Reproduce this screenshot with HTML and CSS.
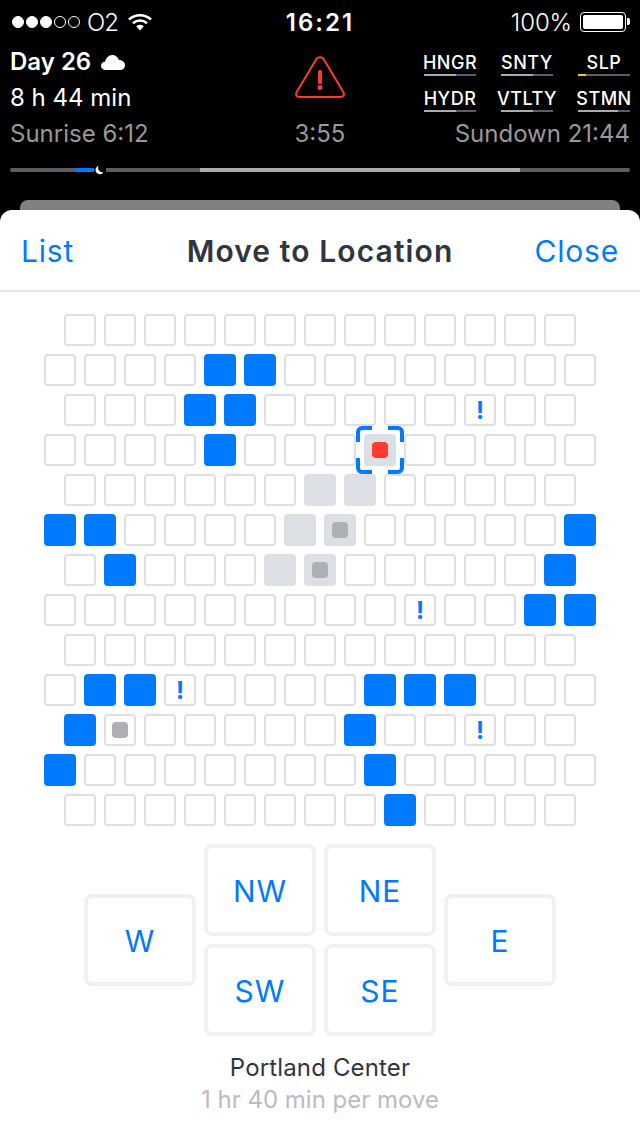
FILE: index.html
```html
<!DOCTYPE html>
<html lang="en">
<head>
    <meta charset="UTF-8">
    <title>Move to Location</title>
    <link rel="stylesheet" href="styles.css">
</head>
<body>
<div class="status">
    <div class="status-left">
        <span class="sig on"></span><span class="sig on"></span><span class="sig on"></span><span class="sig"></span><span class="sig"></span>
        <span class="carrier">O2</span>
        <svg class="wifi" width="24" height="18" viewBox="0 0 24 18">
            <path d="M1 6.500C7.200 .8 16.800 .8 23 6.500" fill="none" stroke="#fff" stroke-width="2.600"/>
            <path d="M5 10.300C9.200 6.600 14.800 6.600 19 10.300" fill="none" stroke="#fff" stroke-width="2.600"/>
            <path d="M8.200 13.200C10.600 11.400 13.400 11.400 15.800 13.200L12 17.500Z" fill="#fff"/>
        </svg>
    </div>
    <div class="clock">16:21</div>
    <div class="status-right">
        <span>100%</span>
        <span class="battery"><i></i></span>
    </div>
</div>

<div class="info">
    <div class="info-left">
        <div class="day">Day 26
            <svg class="cloud" width="24" height="15" viewBox="0 0 24 15">
                <path d="M5 15C2 15 0 13.200 0 10.800 0 8.500 1.800 6.800 4.100 6.800 4.800 3 7.600 0 11.300 0 14.500 0 17 2 17.900 5 21.300 5 24 7.200 24 10.200 24 13 21.800 15 19 15Z" fill="#fff"/>
            </svg>
        </div>
        <div class="line">8 h 44 min</div>
        <div class="line dim">Sunrise 6:12</div>
    </div>
    <div class="info-mid">
        <svg class="warn" width="52" height="44" viewBox="0 0 52 44">
            <path d="M21.800 5C23.800 1.300 28.200 1.300 30.200 5L49 36.500C51.200 40 49.500 42 46 42H6C2.500 42 .8 40 3 36.500Z" fill="none" stroke="#ff3b30" stroke-width="2"/>
            <rect x="24" y="15" width="4" height="14" rx="1.500" fill="#ff3b30"/>
            <circle cx="26" cy="32.500" r="2.500" fill="#ff3b30"/>
        </svg>
        <div class="line dim">3:55</div>
    </div>
    <div class="info-right">
        <div class="stats">
            <div class="stat"><span>HNGR</span><b class="bar"><i class="w60"></i></b></div>
            <div class="stat"><span>SNTY</span><b class="bar"><i class="w60"></i></b></div>
            <div class="stat"><span>SLP</span><b class="bar"><i class="w15 low"></i></b></div>
            <div class="stat"><span>HYDR</span><b class="bar"><i class="w60"></i></b></div>
            <div class="stat"><span>VTLTY</span><b class="bar"><i class="w60"></i></b></div>
            <div class="stat"><span>STMN</span><b class="bar"><i class="w77"></i></b></div>
        </div>
        <div class="line dim">Sundown 21:44</div>
    </div>
</div>

<div class="timeline">
    <i class="seg dark first s66"></i><i class="seg blue s18"></i>
    <svg class="moon" width="14" height="10" viewBox="0 0 14 10">
        <path d="M5.500 0A5 5 0 1 0 11 7.500 5 5 0 0 1 5.500 0Z" fill="#fff"/>
    </svg>
    <i class="seg dark s94"></i><i class="seg light s320"></i><i class="seg dark last s110"></i>
</div>

<div class="back-card"></div>

<div class="sheet">
    <div class="sheet-head">
        <a class="link">List</a>
        <h1>Move to Location</h1>
        <a class="link right">Close</a>
    </div>

    <div class="map">
        <div class="row"><i></i><i></i><i></i><i></i><i></i><i></i><i></i><i></i><i></i><i></i><i></i><i></i><i></i></div>
        <div class="row"><i></i><i></i><i></i><i></i><i class="blue"></i><i class="blue"></i><i></i><i></i><i></i><i></i><i></i><i></i><i></i><i></i></div>
        <div class="row"><i></i><i></i><i></i><i class="blue"></i><i class="blue"></i><i></i><i></i><i></i><i></i><i></i><i class="note">!</i><i></i><i></i></div>
        <div class="row"><i></i><i></i><i></i><i></i><i class="blue"></i><i></i><i></i><i></i><i class="seen here"><u class="dot red"></u>
            <svg class="brackets" width="48" height="48" viewBox="0 0 48 48">
                <path d="M2 16V6a4 4 0 0 1 4-4H16M32 2H42a4 4 0 0 1 4 4V16M46 32V42a4 4 0 0 1-4 4H32M16 46H6a4 4 0 0 1-4-4V32" fill="none" stroke="#007aff" stroke-width="4"/>
            </svg>
        </i><i></i><i></i><i></i><i></i><i></i></div>
        <div class="row"><i></i><i></i><i></i><i></i><i></i><i></i><i class="seen"></i><i class="seen"></i><i></i><i></i><i></i><i></i><i></i></div>
        <div class="row"><i class="blue"></i><i class="blue"></i><i></i><i></i><i></i><i></i><i class="seen"></i><i class="seen"><u class="dot"></u></i><i></i><i></i><i></i><i></i><i></i><i class="blue"></i></div>
        <div class="row"><i></i><i class="blue"></i><i></i><i></i><i></i><i class="seen"></i><i class="seen"><u class="dot"></u></i><i></i><i></i><i></i><i></i><i></i><i class="blue"></i></div>
        <div class="row"><i></i><i></i><i></i><i></i><i></i><i></i><i></i><i></i><i></i><i class="note">!</i><i></i><i></i><i class="blue"></i><i class="blue"></i></div>
        <div class="row"><i></i><i></i><i></i><i></i><i></i><i></i><i></i><i></i><i></i><i></i><i></i><i></i><i></i></div>
        <div class="row"><i></i><i class="blue"></i><i class="blue"></i><i class="note">!</i><i></i><i></i><i></i><i></i><i class="blue"></i><i class="blue"></i><i class="blue"></i><i></i><i></i><i></i></div>
        <div class="row"><i class="blue"></i><i><u class="dot"></u></i><i></i><i></i><i></i><i></i><i></i><i class="blue"></i><i></i><i></i><i class="note">!</i><i></i><i></i></div>
        <div class="row"><i class="blue"></i><i></i><i></i><i></i><i></i><i></i><i></i><i></i><i class="blue"></i><i></i><i></i><i></i><i></i><i></i></div>
        <div class="row"><i></i><i></i><i></i><i></i><i></i><i></i><i></i><i></i><i class="blue"></i><i></i><i></i><i></i><i></i></div>
    </div>

    <div class="pad">
        <div class="dir">W</div>
        <div class="pad-col">
            <div class="dir">NW</div>
            <div class="dir">SW</div>
        </div>
        <div class="pad-col">
            <div class="dir">NE</div>
            <div class="dir">SE</div>
        </div>
        <div class="dir">E</div>
    </div>

    <div class="place">Portland Center</div>
    <div class="cost">1 hr 40 min per move</div>
</div>
</body>
</html>
```
FILE: styles.css
```css
* {
    margin: 0;
    padding: 0;
    box-sizing: border-box;
}
body {
    width: 640px;
    height: 1136px;
    overflow: hidden;
    background-color: #000;
    color: #fff;
    font-family: Inter, "Liberation Sans", sans-serif;
}

/* status bar */
.status {
    height: 44px;
    padding: 0 14px 0 12px;
    display: grid;
    grid-template-columns: 1fr auto 1fr;
    align-items: center;
    font-size: 24px;
}
.status-left {
    display: flex;
    align-items: center;
}
.sig {
    width: 12px;
    height: 12px;
    margin-right: 2px;
    border: 1px solid #fff;
    border-radius: 50%;
}
.sig.on {
    background-color: #fff;
}
.carrier {
    margin-left: 5px;
    letter-spacing: -1px;
    font-weight: 300;
}
.wifi {
    margin-left: 10px;
}
.clock {
    font-weight: 600;
    letter-spacing: 2px;
    padding-left: 2px;
}
.status-right {
    display: flex;
    align-items: center;
    justify-content: flex-end;
    gap: 8px;
}
.status-right span:first-child {
    font-weight: 300;
    letter-spacing: -.1px;
}
.battery {
    width: 46px;
    height: 20px;
    padding: 2px;
    border: 1px solid #fff;
    border-radius: 4px;
    position: relative;
}
.battery i {
    display: block;
    height: 100%;
    background-color: #fff;
    border-radius: 2px;
}
.battery:after {
    content: "";
    position: absolute;
    right: -5px;
    top: 5px;
    width: 3px;
    height: 7px;
    background-color: #fff;
    border-radius: 0 2px 2px 0;
}

/* day info */
.info {
    height: 108px;
    padding: 0 10px;
    display: grid;
    grid-template-columns: 1fr 100px 1fr;
}
.line, .day {
    height: 36px;
    line-height: 36px;
    font-size: 24px;
    white-space: nowrap;
}
.day {
    font-weight: 600;
    display: flex;
    align-items: center;
    gap: 10px;
}
.dim {
    color: #98989d;
}
.info-mid {
    display: flex;
    flex-direction: column;
    align-items: center;
    justify-content: flex-end;
}
.warn {
    margin-bottom: 17px;
}
.info-right {
    display: flex;
    flex-direction: column;
    align-items: flex-end;
}
.stats {
    width: 206px;
    height: 72px;
    display: grid;
    grid-template-columns: 52px 52px 52px;
    grid-template-rows: 36px 36px;
    justify-content: space-between;
}
.stat {
    display: flex;
    flex-direction: column;
    align-items: center;
    justify-content: flex-end;
    font-size: 18px;
    font-weight: 500;
    line-height: 22px;
    letter-spacing: .5px;
    padding-bottom: 4px;
}
.stat span {
    white-space: nowrap;
}
.bar {
    display: block;
    width: 52px;
    height: 2px;
    flex: none;
    background-color: #5e5d63;
}
.bar i {
    display: block;
    height: 100%;
    background-color: #a9adb2;
}
.bar .low {
    background-color: #ffcc00;
}
.w15 { width: 8px; }
.w60 { width: 32px; }
.w77 { width: 40px; }

/* day timeline */
.timeline {
    height: 4px;
    margin: 16px 10px 0;
    display: flex;
    align-items: center;
}
.seg {
    display: block;
    height: 4px;
}
.seg.dark { background-color: #5e5d63; }
.seg.blue { background-color: #007aff; }
.seg.light { background-color: #a9adb2; }
.seg.first { border-radius: 2px 0 0 2px; }
.seg.last { border-radius: 0 2px 2px 0; }
.s66 { width: 66px; }
.s18 { width: 18px; }
.s94 { width: 94px; }
.s320 { width: 320px; }
.s110 { width: 110px; }
.moon {
    width: 12px;
    flex: none;
}

.back-card {
    height: 10px;
    margin: 28px 20px 0;
    background-color: #808080;
    border-radius: 8px 8px 0 0;
}

/* sheet */
.sheet {
    height: 926px;
    background-color: #fff;
    border-radius: 12px 12px 0 0;
    color: #31353f;
}
.sheet-head {
    height: 82px;
    padding: 2px 21px 0;
    display: grid;
    grid-template-columns: 1fr auto 1fr;
    align-items: center;
    border-bottom: 2px solid #e5e6ea;
}
.sheet-head h1 {
    font-size: 30px;
    font-weight: 600;
    letter-spacing: 1.100px;
}
.link {
    font-size: 30px;
    letter-spacing: .8px;
    color: #007aff;
}
.link.right {
    text-align: right;
}

/* location grid */
.map {
    padding-top: 22px;
    display: flex;
    flex-direction: column;
    gap: 8px;
}
.row {
    display: flex;
    justify-content: center;
    gap: 8px;
}
.row i {
    width: 32px;
    height: 32px;
    flex: none;
    display: flex;
    align-items: center;
    justify-content: center;
    border: 2px solid #dcdfe3;
    border-radius: 4px;
    font-style: normal;
}
.row .blue {
    background-color: #007aff;
    border-color: #007aff;
}
.row .seen {
    background-color: #dcdfe3;
}
.row .note {
    color: #007aff;
    font-size: 24px;
    font-weight: 700;
}
.row .here {
    position: relative;
}
.dot {
    display: block;
    width: 16px;
    height: 16px;
    flex: none;
    background-color: #aeb0b4;
    border-radius: 4px;
}
.dot.red {
    background-color: #ff3b30;
}
.brackets {
    position: absolute;
    left: -10px;
    top: -10px;
}

/* direction buttons */
.pad {
    margin-top: 18px;
    display: flex;
    justify-content: center;
    align-items: center;
    gap: 8px;
}
.pad-col {
    display: flex;
    flex-direction: column;
    gap: 8px;
}
.dir {
    width: 112px;
    height: 92px;
    padding-top: 2px;
    display: flex;
    align-items: center;
    justify-content: center;
    border: 4px solid #f0f1f5;
    border-radius: 8px;
    color: #007aff;
    font-size: 30px;
    letter-spacing: 1px;
}

.place {
    margin-top: 16px;
    text-align: center;
    font-size: 24px;
    letter-spacing: .15px;
    line-height: 32px;
}
.cost {
    text-align: center;
    font-size: 24px;
    line-height: 32px;
    color: #b9bbc0;
}
```
